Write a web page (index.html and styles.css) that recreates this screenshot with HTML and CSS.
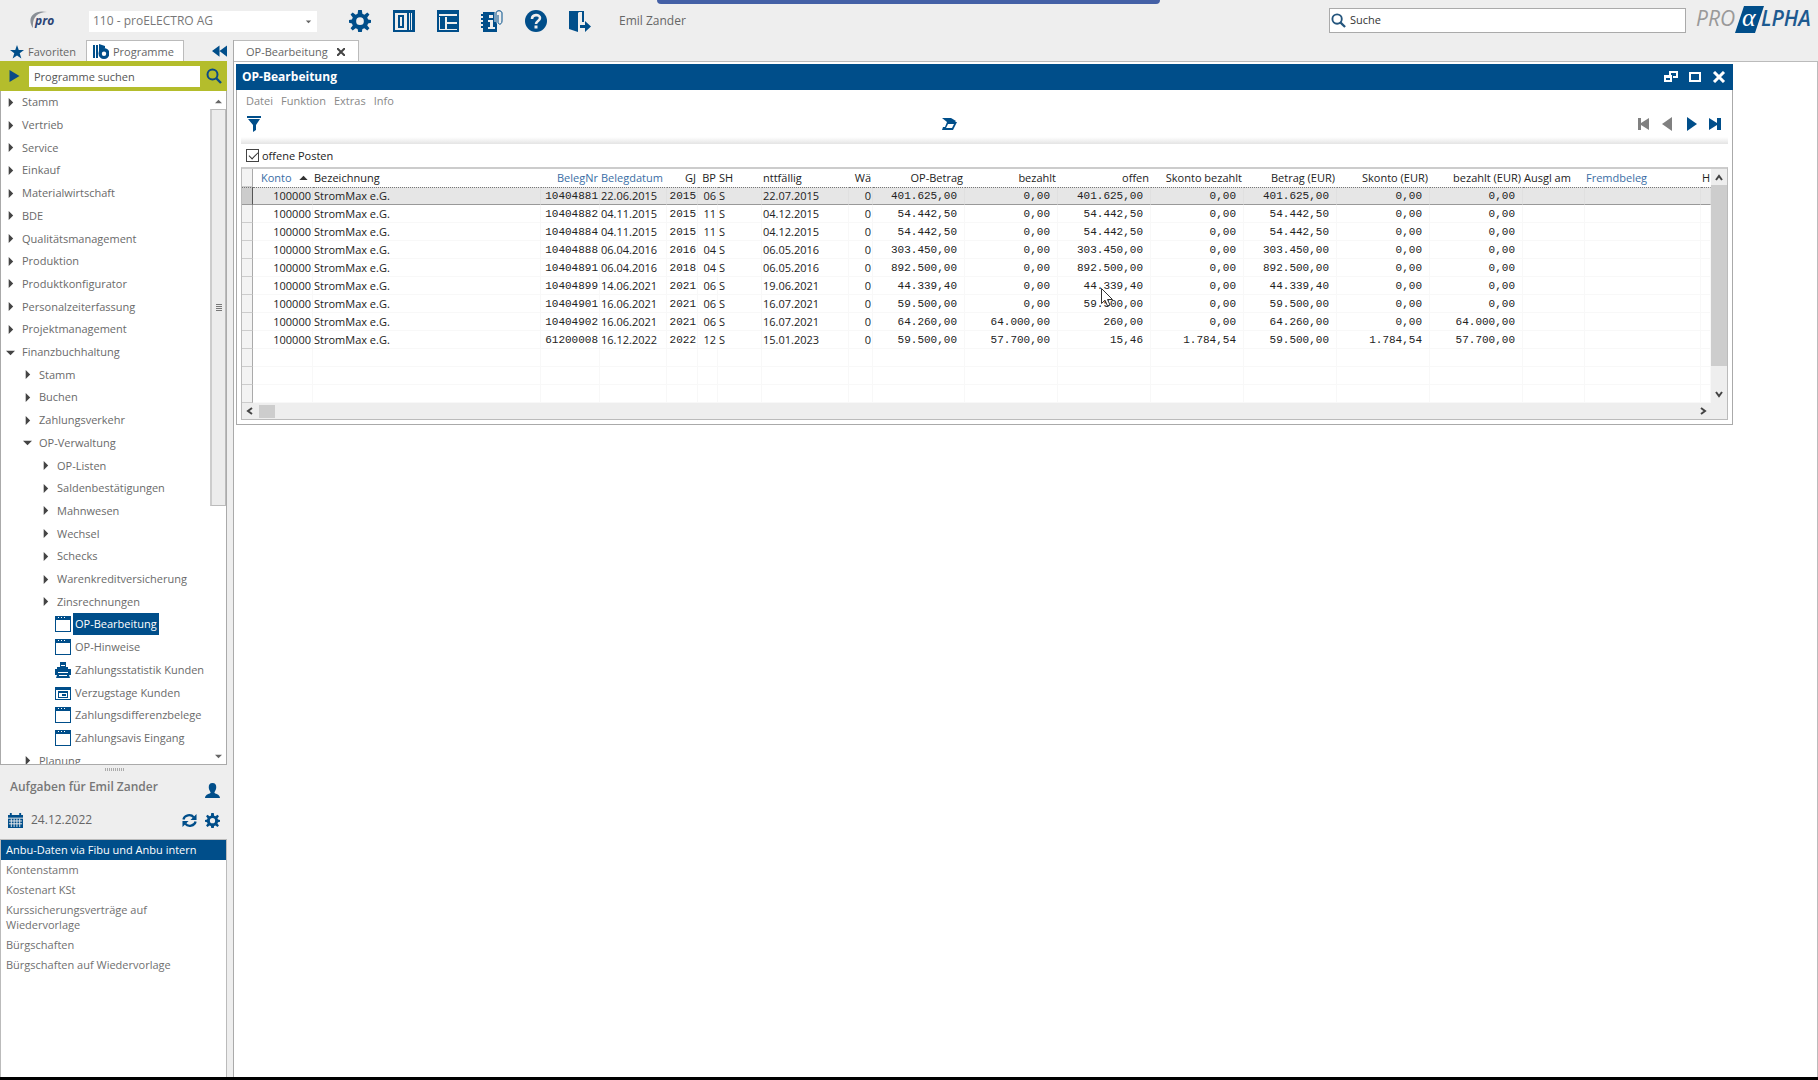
FILE: index.html
```html
<!DOCTYPE html>
<html lang="de">
<head>
<meta charset="utf-8">
<meta name="viewport" content="width=device-width, initial-scale=1">
<title>proALPHA – OP-Bearbeitung</title>
<link rel="stylesheet" href="styles.css">
</head>
<body>
<svg class="defs" aria-hidden="true">
  <symbol id="gear" viewBox="0 0 24 24"><path fill-rule="evenodd" d="M10 0h4l.6 4.200 2.200.9 3.200-2.400 2.300 2.300-2.400 3.200.9 2.200 3.200.6v3l-3.200.6-.9 2.200 2.400 3.200-2.300 2.300-3.200-2.400-2.200.9L14 24h-4l-.6-3.200-2.200-.9L4 22.300 1.700 20l2.400-3.200-.9-2.200L0 14v-3l3.200-.6.9-2.200L1.700 5 4 2.700l3.200 2.400 2.200-.9zM12 8a4.200 4.200 0 1 0 0 8.400A4.200 4.200 0 0 0 12 8z"/></symbol>
  <symbol id="lens" viewBox="0 0 16 16"><circle cx="6.500" cy="6.500" r="5" fill="none" stroke="currentColor" stroke-width="2"/><path d="M10 10l5 5" stroke="currentColor" stroke-width="2.400"/></symbol>
  <symbol id="right" viewBox="0 0 10 10"><path d="M3 0l5 5-5 5z"/></symbol>
  <symbol id="down" viewBox="0 0 10 10"><path d="M0 3h10L5 8z"/></symbol>
  <symbol id="form" viewBox="0 0 16 16"><path fill="#fff" d="M1 1h14v14H1z"/><path fill-rule="evenodd" d="M0 0h16v16H0zM1 4v11h14V4z"/><path fill="#fff" d="M3 1h1v1H3zM6 1h1v1H6zM9 1h1v1H9z"/></symbol>
  <symbol id="report" viewBox="0 0 16 16"><path fill-rule="evenodd" d="M0 2h16v13H0zM1 5v9h14V5z"/><path fill-rule="evenodd" d="M3 6h10v7H3zM4 8v4h8V8z"/><path d="M7 9h4v2H7z"/></symbol>
  <symbol id="printer" viewBox="0 0 16 16"><path d="M5 0h6v5h2v2h3v6h-2l1 3H1l1-3H0V7h2V5h3z"/><path fill="#fff" d="M3 10h10v1H3zM4 13h8v1H4zM6 3h4v1H6z"/></symbol>
</svg>

<header class="topbar">
  <svg class="logo-small" viewBox="0 0 28 20" role="img" aria-label="pro"><path d="M4 18C-3 8 5-1 18 2 8 2 3 8 4 18z" fill="#8a8f96"/><text x="6" y="15" class="logo-small-text">pro</text></svg>
  <div class="client">
    <select aria-label="Mandant"><option>110 - proELECTRO AG</option></select>
    <svg class="client-arrow" viewBox="0 0 10 10"><path d="M2 4h6L5 7z"/></svg>
  </div>
  <nav class="tools" aria-label="Werkzeuge">
    <button type="button" aria-label="Einstellungen"><svg><use href="#gear"/></svg></button>
    <button type="button" aria-label="Spalten"><svg viewBox="0 0 22 22"><path d="M0 0h22v22H0z"/><path fill="#eee" fill-rule="evenodd" d="M2 3h12v17H2zM5 5v13h6V5z"/><path fill="#eee" d="M7 7h2v9H7zM16 3h1v17h-1zM18 3h1v17h-1z"/></svg></button>
    <button type="button" aria-label="Layout"><svg viewBox="0 0 22 22"><path d="M0 0h22v22H0z"/><path fill="#eee" d="M2 4h18v2H2zM2 7h1v13H2zM8 7h2v13H8zM10 12h10v2H10zM2 19h18v1H2z"/></svg></button>
    <button type="button" aria-label="Info"><svg viewBox="0 0 22 22"><path d="M2 2h14v20H2zM0 4h3v2H0zM0 8h3v2H0zM0 12h3v2H0zM0 16h3v2H0z"/><path fill="#eee" d="M8 5h4v3H8zM7 10h5v7h2v2H7v-2h2v-5H7z"/><path d="M15 12V3c0-3 6-3 6 0v8c0 4-4 4-4 1V5" fill="none" stroke="#eee" stroke-width="3"/><path d="M15 12V3c0-3 6-3 6 0v8c0 4-4 4-4 1V5" fill="none" stroke="currentColor"/></svg></button>
    <button type="button" aria-label="Hilfe"><svg viewBox="0 0 22 22"><circle cx="11" cy="11" r="11"/><path d="M7 9c0-5 8-5 8-1 0 3-4 3-4 6" fill="none" stroke="#eee" stroke-width="2.600"/><path fill="#eee" d="M9.500 15.500h3v3h-3z"/></svg></button>
    <button type="button" aria-label="Abmelden"><svg viewBox="0 0 22 22"><path d="M0 1h15v11h-2V2h-3L9 3v19l-9-3z"/><path d="M11 15h5v-4l6 5.500-6 5.500v-4h-5z"/></svg></button>
  </nav>
  <span class="user">Emil Zander</span>
  <label class="search"><svg><use href="#lens"/></svg><input type="text" value="Suche" aria-label="Suche"></label>
  <svg class="brand" viewBox="0 0 120 28" role="img" aria-label="proALPHA"><path d="M48 0h20l-9 27H39z" fill="#004e8a"/><text x="0" y="20" class="brand-pro">PRO</text><text x="46" y="20" class="brand-alpha">α</text><text x="65" y="20" class="brand-lpha">LPHA</text></svg>
  <div class="session-bar"></div>
</header>

<div class="workspace">
  <aside class="sidebar">
    <div class="side-tabs">
      <button type="button" class="side-tab"><svg viewBox="0 0 16 16"><path d="M8 0l2 5.800h6l-4.900 3.600L13 15.500 8 12l-5 3.500 1.900-6.100L0 5.800h6z"/></svg>Favoriten</button>
      <button type="button" class="side-tab active"><svg viewBox="0 0 16 16"><path d="M0 1h2v13H0zM3 1h2v13H3zM6 0l6 2v2L8 6l-2 3z"/><path fill-rule="evenodd" d="M11 4a5.500 5.500 0 1 0 0 11 5.500 5.500 0 0 0 0-11zm0 3.500a2.200 2.200 0 1 1 0 4.400 2.200 2.200 0 0 1 0-4.400z"/></svg>Programme</button>
      <button type="button" class="collapse" aria-label="Einklappen"><svg viewBox="0 0 16 12"><path d="M8 0v12L0 6zM16 0v12L8 6z"/></svg></button>
    </div>
    <div class="prog-search">
      <button type="button" aria-label="Start"><svg viewBox="0 0 10 12"><path d="M0 0l10 6-10 6z"/></svg></button>
      <input type="text" value="Programme suchen" aria-label="Programme suchen">
      <button type="button" aria-label="Suchen"><svg class="lens"><use href="#lens"/></svg></button>
    </div>
    <nav class="tree-box" aria-label="Programme">
      <ul class="tree">
        <li><svg><use href="#right"/></svg><a href="#">Stamm</a></li>
        <li><svg><use href="#right"/></svg><a href="#">Vertrieb</a></li>
        <li><svg><use href="#right"/></svg><a href="#">Service</a></li>
        <li><svg><use href="#right"/></svg><a href="#">Einkauf</a></li>
        <li><svg><use href="#right"/></svg><a href="#">Materialwirtschaft</a></li>
        <li><svg><use href="#right"/></svg><a href="#">BDE</a></li>
        <li><svg><use href="#right"/></svg><a href="#">Qualitätsmanagement</a></li>
        <li><svg><use href="#right"/></svg><a href="#">Produktion</a></li>
        <li><svg><use href="#right"/></svg><a href="#">Produktkonfigurator</a></li>
        <li><svg><use href="#right"/></svg><a href="#">Personalzeiterfassung</a></li>
        <li><svg><use href="#right"/></svg><a href="#">Projektmanagement</a></li>
        <li><svg><use href="#down"/></svg><a href="#">Finanzbuchhaltung</a></li>
        <li class="l2"><svg><use href="#right"/></svg><a href="#">Stamm</a></li>
        <li class="l2"><svg><use href="#right"/></svg><a href="#">Buchen</a></li>
        <li class="l2"><svg><use href="#right"/></svg><a href="#">Zahlungsverkehr</a></li>
        <li class="l2"><svg><use href="#down"/></svg><a href="#">OP-Verwaltung</a></li>
        <li class="l3"><svg><use href="#right"/></svg><a href="#">OP-Listen</a></li>
        <li class="l3"><svg><use href="#right"/></svg><a href="#">Saldenbestätigungen</a></li>
        <li class="l3"><svg><use href="#right"/></svg><a href="#">Mahnwesen</a></li>
        <li class="l3"><svg><use href="#right"/></svg><a href="#">Wechsel</a></li>
        <li class="l3"><svg><use href="#right"/></svg><a href="#">Schecks</a></li>
        <li class="l3"><svg><use href="#right"/></svg><a href="#">Warenkreditversicherung</a></li>
        <li class="l3"><svg><use href="#right"/></svg><a href="#">Zinsrechnungen</a></li>
        <li class="leaf"><svg><use href="#form"/></svg><a href="#" class="current">OP-Bearbeitung</a></li>
        <li class="leaf"><svg><use href="#form"/></svg><a href="#">OP-Hinweise</a></li>
        <li class="leaf"><svg><use href="#printer"/></svg><a href="#">Zahlungsstatistik Kunden</a></li>
        <li class="leaf"><svg><use href="#report"/></svg><a href="#">Verzugstage Kunden</a></li>
        <li class="leaf"><svg><use href="#form"/></svg><a href="#">Zahlungsdifferenzbelege</a></li>
        <li class="leaf"><svg><use href="#form"/></svg><a href="#">Zahlungsavis Eingang</a></li>
        <li class="l2"><svg><use href="#right"/></svg><a href="#">Planung</a></li>
      </ul>
      <div class="tree-scroll">
        <svg viewBox="0 0 8 8"><path d="M0 6h8L4 2z"/></svg>
        <div class="tree-thumb"><span></span></div>
        <svg viewBox="0 0 8 8"><path d="M0 2h8L4 6z"/></svg>
      </div>
    </nav>
    <div class="splitter"><span></span></div>
    <section class="tasks">
      <div class="tasks-head">
        <h2>Aufgaben für Emil Zander</h2>
        <svg viewBox="0 0 16 16"><path d="M8 0c3 0 4 2 4 4.500S10.500 9 10 10c0 1.500 6 1.500 6 6H0c0-4.500 6-4.500 6-6-.5-1-2-3-2-5.500S5 0 8 0z"/></svg>
      </div>
      <div class="tasks-date">
        <svg viewBox="0 0 16 16"><path d="M0 2h2V0h2v2h8V0h2v2h2v14H0z"/><path stroke="#eee" d="M0 5.500h16M1 8.500h14M1 11.500h14M3.500 6v9M6.500 6v9M9.500 6v9M12.500 6v9" fill="none"/></svg>
        <time datetime="2022-12-24">24.12.2022</time>
        <button type="button" aria-label="Aktualisieren"><svg viewBox="0 0 16 16"><path d="M1.500 7c1-5 8-6 11-2.500M14.500 9c-1 5-8 6-11 2.500" fill="none" stroke="currentColor" stroke-width="2.400"/><path d="M15.500 1v6.500H9zM.5 15V8.500H7z"/></svg></button>
        <button type="button" aria-label="Aufgaben einstellen"><svg><use href="#gear"/></svg></button>
      </div>
      <ul class="task-list">
        <li class="current">Anbu-Daten via Fibu und Anbu intern</li>
        <li>Kontenstamm</li>
        <li>Kostenart KSt</li>
        <li>Kurssicherungsverträge auf Wiedervorlage</li>
        <li>Bürgschaften</li>
        <li>Bürgschaften auf Wiedervorlage</li>
      </ul>
    </section>
  </aside>

  <main class="content">
    <div class="doc-tabs">
      <div class="doc-tab">OP-Bearbeitung<button type="button" aria-label="Tab schließen"><svg viewBox="0 0 8 8"><path d="M0 0l8 8M8 0L0 8" stroke="currentColor" stroke-width="2"/></svg></button></div>
    </div>
    <div class="desk">
      <section class="window">
        <div class="titlebar">
          <h1>OP-Bearbeitung</h1>
          <button type="button" aria-label="Wiederherstellen"><svg viewBox="0 0 14 12"><path fill="none" stroke="currentColor" stroke-width="2" d="M1 6h6v4H1zM6 4V1h7v5H9"/><path d="M0 4h8v2H0zM5 0h9v2H5z"/></svg></button>
          <button type="button" aria-label="Maximieren"><svg viewBox="0 0 14 12"><path fill="none" stroke="currentColor" stroke-width="2" d="M2 2h10v8H2z"/><path d="M1 1h12v2H1z"/></svg></button>
          <button type="button" aria-label="Schließen"><svg viewBox="0 0 14 12"><path stroke="currentColor" stroke-width="3" d="M2 1l10 10M12 1L2 11"/></svg></button>
        </div>
        <nav class="menu" aria-label="Menü"><a href="#">Datei</a><a href="#">Funktion</a><a href="#">Extras</a><a href="#">Info</a></nav>
        <div class="toolbar">
          <button type="button" aria-label="Filter"><svg viewBox="0 0 16 16"><path d="M1 0h14v2H1zM2 3h12l-4 6v5l-3 2V9z"/></svg></button>
          <button type="button" aria-label="Verknüpfungen"><svg viewBox="0 0 16 16"><path d="M1 2h9l5 3-1 1H6z"/><path fill-rule="evenodd" d="M6 6h10l-4 8H1l1-3h2zM7 8l-2 4h6l2-4z"/></svg></button>
          <div class="record-nav">
            <button type="button" disabled aria-label="Erster"><svg viewBox="0 0 16 16"><path d="M2 2h3v5l8-5v12L5 9v5H2z"/></svg></button>
            <button type="button" disabled aria-label="Zurück"><svg viewBox="0 0 16 16"><path d="M12 1v14L2 8z"/></svg></button>
            <button type="button" aria-label="Weiter"><svg viewBox="0 0 16 16"><path d="M3 1v14l10-7z"/></svg></button>
            <button type="button" aria-label="Letzter"><svg viewBox="0 0 16 16"><path d="M1 2l8 5V2h4v12H9V9l-8 5z"/></svg></button>
          </div>
        </div>
        <label class="filter"><input type="checkbox" checked>offene Posten</label>
        <div class="grid">
          <div class="grid-view">
            <table>
              <colgroup><col class="c-mark"><col class="c-konto"><col class="c-bez"><col class="c-nr"><col class="c-date"><col class="c-gj"><col class="c-bp"><col class="c-sh"><col class="c-due"><col class="c-wa"><col class="c-op"><col class="c-amt"><col class="c-amt"><col class="c-amt"><col class="c-amt"><col class="c-amt"><col class="c-amt"><col class="c-ausgl"><col><col class="c-h"></colgroup>
              <thead><tr><th></th><th class="key sorted">Konto<svg viewBox="0 0 10 6"><path d="M0 6h10L5 1z"/></svg></th><th>Bezeichnung</th><th class="key num">BelegNr</th><th class="key">Belegdatum</th><th class="num">GJ</th><th class="num">BP</th><th>SH</th><th>nttfällig</th><th class="num">Wä</th><th class="num">OP-Betrag</th><th class="num">bezahlt</th><th class="num">offen</th><th class="num">Skonto bezahlt</th><th class="num">Betrag (EUR)</th><th class="num">Skonto (EUR)</th><th class="num">bezahlt (EUR)</th><th>Ausgl am</th><th class="key">Fremdbeleg</th><th>H</th></tr></thead>
              <tbody>
                <tr class="selected"><td></td><td class="num">100000</td><td>StromMax e.G.</td><td class="id">10404881</td><td>22.06.2015</td><td class="id">2015</td><td class="num">06</td><td>S</td><td>22.07.2015</td><td class="num">0</td><td class="amt">401.625,00</td><td class="amt">0,00</td><td class="amt">401.625,00</td><td class="amt">0,00</td><td class="amt">401.625,00</td><td class="amt">0,00</td><td class="amt">0,00</td><td></td><td></td><td></td></tr>
                <tr><td></td><td class="num">100000</td><td>StromMax e.G.</td><td class="id">10404882</td><td>04.11.2015</td><td class="id">2015</td><td class="num">11</td><td>S</td><td>04.12.2015</td><td class="num">0</td><td class="amt">54.442,50</td><td class="amt">0,00</td><td class="amt">54.442,50</td><td class="amt">0,00</td><td class="amt">54.442,50</td><td class="amt">0,00</td><td class="amt">0,00</td><td></td><td></td><td></td></tr>
                <tr><td></td><td class="num">100000</td><td>StromMax e.G.</td><td class="id">10404884</td><td>04.11.2015</td><td class="id">2015</td><td class="num">11</td><td>S</td><td>04.12.2015</td><td class="num">0</td><td class="amt">54.442,50</td><td class="amt">0,00</td><td class="amt">54.442,50</td><td class="amt">0,00</td><td class="amt">54.442,50</td><td class="amt">0,00</td><td class="amt">0,00</td><td></td><td></td><td></td></tr>
                <tr><td></td><td class="num">100000</td><td>StromMax e.G.</td><td class="id">10404888</td><td>06.04.2016</td><td class="id">2016</td><td class="num">04</td><td>S</td><td>06.05.2016</td><td class="num">0</td><td class="amt">303.450,00</td><td class="amt">0,00</td><td class="amt">303.450,00</td><td class="amt">0,00</td><td class="amt">303.450,00</td><td class="amt">0,00</td><td class="amt">0,00</td><td></td><td></td><td></td></tr>
                <tr><td></td><td class="num">100000</td><td>StromMax e.G.</td><td class="id">10404891</td><td>06.04.2016</td><td class="id">2018</td><td class="num">04</td><td>S</td><td>06.05.2016</td><td class="num">0</td><td class="amt">892.500,00</td><td class="amt">0,00</td><td class="amt">892.500,00</td><td class="amt">0,00</td><td class="amt">892.500,00</td><td class="amt">0,00</td><td class="amt">0,00</td><td></td><td></td><td></td></tr>
                <tr><td></td><td class="num">100000</td><td>StromMax e.G.</td><td class="id">10404899</td><td>14.06.2021</td><td class="id">2021</td><td class="num">06</td><td>S</td><td>19.06.2021</td><td class="num">0</td><td class="amt">44.339,40</td><td class="amt">0,00</td><td class="amt">44.339,40</td><td class="amt">0,00</td><td class="amt">44.339,40</td><td class="amt">0,00</td><td class="amt">0,00</td><td></td><td></td><td></td></tr>
                <tr><td></td><td class="num">100000</td><td>StromMax e.G.</td><td class="id">10404901</td><td>16.06.2021</td><td class="id">2021</td><td class="num">06</td><td>S</td><td>16.07.2021</td><td class="num">0</td><td class="amt">59.500,00</td><td class="amt">0,00</td><td class="amt">59.500,00</td><td class="amt">0,00</td><td class="amt">59.500,00</td><td class="amt">0,00</td><td class="amt">0,00</td><td></td><td></td><td></td></tr>
                <tr><td></td><td class="num">100000</td><td>StromMax e.G.</td><td class="id">10404902</td><td>16.06.2021</td><td class="id">2021</td><td class="num">06</td><td>S</td><td>16.07.2021</td><td class="num">0</td><td class="amt">64.260,00</td><td class="amt">64.000,00</td><td class="amt">260,00</td><td class="amt">0,00</td><td class="amt">64.260,00</td><td class="amt">0,00</td><td class="amt">64.000,00</td><td></td><td></td><td></td></tr>
                <tr><td></td><td class="num">100000</td><td>StromMax e.G.</td><td class="id">61200008</td><td>16.12.2022</td><td class="id">2022</td><td class="num">12</td><td>S</td><td>15.01.2023</td><td class="num">0</td><td class="amt">59.500,00</td><td class="amt">57.700,00</td><td class="amt">15,46</td><td class="amt">1.784,54</td><td class="amt">59.500,00</td><td class="amt">1.784,54</td><td class="amt">57.700,00</td><td></td><td></td><td></td></tr>
                <tr><td></td><td></td><td></td><td></td><td></td><td></td><td></td><td></td><td></td><td></td><td></td><td></td><td></td><td></td><td></td><td></td><td></td><td></td><td></td><td></td></tr>
                <tr><td></td><td></td><td></td><td></td><td></td><td></td><td></td><td></td><td></td><td></td><td></td><td></td><td></td><td></td><td></td><td></td><td></td><td></td><td></td><td></td></tr>
                <tr><td></td><td></td><td></td><td></td><td></td><td></td><td></td><td></td><td></td><td></td><td></td><td></td><td></td><td></td><td></td><td></td><td></td><td></td><td></td><td></td></tr>
              </tbody>
            </table>
            <div class="vscroll">
              <svg viewBox="0 0 8 8"><path d="M1 6l3-4 3 4"/></svg>
              <div class="vthumb"></div>
              <svg viewBox="0 0 8 8"><path d="M1 2l3 4 3-4"/></svg>
            </div>
          </div>
          <div class="hscroll">
            <svg viewBox="0 0 8 8"><path d="M6 1L2 4l4 3"/></svg>
            <div class="hthumb"></div>
            <svg viewBox="0 0 8 8"><path d="M2 1l4 3-4 3"/></svg>
          </div>
        </div>
      </section>
    </div>
  </main>
</div>
<svg class="pointer" viewBox="0 0 13 20" aria-hidden="true"><path d="M.5.500v15l3.500-3.300 2.500 5.800 2.500-1-2.500-5.500H11.500z" fill="#fff" stroke="#333"/></svg>
</body>
</html>
```
FILE: styles.css
```css
* { box-sizing: border-box; }

body {
  margin: 0;
  height: 100vh;
  display: flex;
  flex-direction: column;
  overflow: hidden;
  position: relative;
  background: #eee;
  border-bottom: 3px solid #000;
  color: #666;
  font: 11px/16px "Open Sans", "Noto Sans", sans-serif;
}

button, input, select { font: inherit; color: inherit; }
button { display: flex; align-items: center; border: 0; padding: 0; background: none; }
svg { fill: currentColor; flex: none; }
ul { list-style: none; margin: 0; padding: 0; }
a { color: inherit; text-decoration: none; }
.defs { display: none; }

/* top bar */
.topbar {
  height: 40px;
  flex: none;
  display: flex;
  align-items: center;
  padding: 0 2px 0 29px;
  position: relative;
}
.logo-small { width: 28px; height: 20px; }
.logo-small-text { font: italic bold 12px "Open Sans", sans-serif; fill: #2d4475; }
.client { display: flex; align-items: center; width: 228px; height: 21px; margin: 2px 0 0 32px; background: #fff; }
.client select { flex: 1; height: 21px; appearance: none; border: 0; padding: 0 4px; background: none; font-size: 12px; color: #777; }
.client-arrow { width: 9px; height: 9px; margin-right: 4px; }
.tools { display: flex; gap: 22px; margin: 2px 0 0 32px; color: #004e8a; }
.tools svg { width: 22px; height: 22px; }
.user { margin: 2px 0 0 28px; font-size: 12px; }
.search {
  display: flex;
  align-items: center;
  width: 357px;
  height: 25px;
  margin: 0 10px 0 auto;
  padding-left: 1px;
  background: #fff;
  border: 1px solid #aaa;
}
.search svg { width: 15px; height: 15px; color: #24557d; }
.search input { flex: 1; border: 0; padding: 0 4px; background: none; color: #333; }
.brand { width: 120px; height: 28px; }
.brand-pro, .brand-lpha { font: italic 21px "Open Sans", sans-serif; fill: #999; }
.brand-lpha { fill: #1d5a90; font-weight: 600; }
.brand-alpha { font: italic 26px "Liberation Serif", serif; fill: #fff; }
.session-bar {
  position: absolute;
  top: 0;
  left: 50%;
  width: 503px;
  height: 4px;
  margin-left: -252px;
  border-radius: 0 0 4px 4px;
  background: #4460a6;
}

.workspace { flex: 1; min-height: 0; display: flex; gap: 6px; }

/* sidebar */
.sidebar { width: 227px; flex: none; display: flex; flex-direction: column; }
.side-tabs { display: flex; height: 21px; padding-left: 10px; }
.side-tab { gap: 4px; padding: 2px 0 0; width: 76px; }
.side-tab svg { width: 14px; height: 14px; color: #004e8a; }
.side-tab.active { width: 98px; padding-left: 6px; background: #fff; border: 1px solid #bbb; border-bottom: 0; }
.side-tab.active svg { width: 16px; height: 16px; }
.collapse { margin-left: auto; color: #004e8a; }
.collapse svg { width: 15px; height: 12px; }
.prog-search { display: flex; align-items: center; height: 30px; padding: 0 5px 0 9px; background: #b4bd2c; color: #0b4a86; }
.prog-search svg { width: 11px; height: 12px; }
.prog-search .lens { width: 16px; height: 16px; }
.prog-search input { flex: 1; min-width: 0; height: 21px; margin: 0 6px 0 9px; padding: 0 5px; border: 0; background: #fff; color: #555; }

.tree-box { flex: 1; min-height: 0; display: flex; overflow: hidden; background: #fff; border: 1px solid #aaa; border-top: 0; }
.tree { flex: 1; display: grid; grid-auto-rows: 1fr; margin-bottom: -8px; color: #6a6a6a; }
.tree li { display: flex; align-items: center; gap: 7px; padding-left: 5px; min-height: 0; white-space: nowrap; }
.tree svg { width: 9px; height: 9px; color: #444; }
.tree .l2 { padding-left: 22px; }
.tree .l3 { padding-left: 40px; }
.tree .leaf { padding-left: 54px; gap: 2px; }
.tree .leaf svg { width: 16px; height: 16px; color: #004e8a; }
.tree .leaf a { padding: 3px 2px; }
.tree .leaf .current { background: #004e8a; color: #fff; }
.tree-scroll { width: 16px; flex: none; display: flex; flex-direction: column; align-items: center; padding: 7px 0 4px; }
.tree-scroll svg { width: 7px; height: 7px; }
.tree-thumb { width: 16px; height: 60%; margin: 4px 0 auto; background: #ececec; border: 1px solid #bbb; border-left: 2px solid #ccc; display: flex; align-items: center; justify-content: center; }
.tree-thumb span { width: 6px; height: 7px; background: repeating-linear-gradient(#777 0 1px, #ececec 1px 2px); }
.splitter { height: 8px; display: flex; justify-content: center; align-items: center; padding-left: 2px; }
.splitter span { width: 20px; height: 3px; background: repeating-linear-gradient(90deg, #aaa 0 1px, #eee 1px 2px); }

/* tasks */
.tasks { height: 304px; flex: none; display: flex; flex-direction: column; }
.tasks h2 { margin: 0; font-size: 12px; font-weight: 600; line-height: 20px; color: #777; }
.tasks-head, .tasks-date { display: flex; align-items: center; height: 28px; padding: 0 7px 0 10px; }
.tasks-date { height: 38px; padding-left: 8px; gap: 8px; }
.tasks time { flex: 1; font-size: 12px; }
.tasks svg { width: 15px; height: 15px; color: #004e8a; }
.tasks-head svg { margin: 6px 0 0 auto; }
.task-list { flex: 1; background: #fff; border: 1px solid #bbb; border-bottom: 0; color: #707070; }
.task-list li { padding: 2px 46px 3px 5px; line-height: 15px; }
.task-list .current { background: #004e8a; color: #fff; padding-right: 0; }

/* document area */
.content { flex: 1; min-width: 0; display: flex; flex-direction: column; border-left: 1px solid #aaa; }
.doc-tabs { height: 21px; display: flex; }
.doc-tab { display: flex; align-items: center; gap: 9px; width: 125px; padding: 2px 0 0 12px; background: #fff; border: 1px solid #bbb; border-width: 1px 1px 0 0; }
.doc-tab button { color: #444; }
.doc-tab svg { width: 8px; height: 8px; }
.desk { flex: 1; padding: 2px 84px 0 2px; background: #fff; border-top: 1px solid #bbb; border-right: 1px solid #bbb; }

/* program window */
.window { border: 1px solid #aaa; border-top: 0; padding: 0 4px 4px; background: #fff; color: #222; }
.titlebar { display: flex; align-items: center; gap: 10px; height: 26px; margin: 0 -5px; padding: 0 7px 0 6px; background: #004e8a; color: #fff; }
.titlebar h1 { flex: 1; margin: 0; font-size: 12px; font-weight: 700; line-height: 16px; }
.titlebar svg { width: 14px; height: 12px; }
.menu { display: flex; gap: 8px; height: 21px; padding-left: 5px; line-height: 22px; color: #888; }
.toolbar { display: grid; grid-template-columns: 47% 1fr auto; align-items: center; height: 33px; padding: 0 4px 7px 5px; background: linear-gradient(#fff 26px, #e4e4e4); color: #004e8a; }
.toolbar svg { width: 16px; height: 16px; }
.record-nav { display: flex; gap: 8px; }
.record-nav button:disabled { color: #808080; }
.filter { display: flex; align-items: center; gap: 3px; width: max-content; height: 23px; padding-left: 5px; }
.filter input { position: relative; appearance: none; width: 13px; height: 13px; margin: 0; border: 1px solid #444; background: #fff; }
.filter input:checked::before { content: ""; position: absolute; left: 2px; top: 2px; width: 8px; height: 4px; border: solid #333; border-width: 0 0 1px 1px; transform: rotate(-45deg); }

.grid { border: 1px solid #bbb; border-top: 2px solid #ccc; }
.grid-view { display: flex; }
table { flex: 1; width: 0; table-layout: fixed; border-collapse: separate; border-spacing: 0; }
.c-mark { width: 11px; }
.c-konto { width: 60px; }
.c-bez { width: 228px; }
.c-nr { width: 59px; }
.c-date { width: 67px; }
.c-gj { width: 31px; }
.c-bp { width: 20px; }
.c-sh { width: 44px; }
.c-due { width: 87px; }
.c-wa { width: 24px; }
.c-op { width: 92px; }
.c-amt { width: 93px; }
.c-ausgl { width: 62px; }
.c-h { width: 10px; }
th, td { height: 18px; padding: 0 1px; line-height: 16px; white-space: nowrap; text-align: left; font-weight: 400; border-right: 1px solid #f8f8f8; border-bottom: 1px solid #f8f8f8; }
th { border-color: #fff; }
.num, .id, .amt { text-align: right; }
.id, .amt { font-family: "Liberation Mono", monospace; }
.amt { padding-right: 7px; }
.key { color: #3a6ea5; }
.sorted { padding-left: 8px; }
.sorted svg { width: 9px; height: 5px; margin: 0 0 2px 7px; color: #333; }
th:first-child, td:first-child { background: #f3f3f3; border-right: 1px solid #aaa; border-bottom-color: #ccc; }
.selected td { background: #e6e6e6; border-top: 1px dotted #777; border-bottom: 1px solid #999; border-right-color: #e0e0e0; }
.selected td:first-child { background: #ccc; border-right-color: #555; }

.vscroll { width: 16px; display: flex; flex-direction: column; align-items: center; justify-content: space-between; padding: 5px 0; background: #eee; }
.vscroll svg, .hscroll svg { width: 8px; height: 8px; fill: none; stroke: #444; stroke-width: 2px; }
.vthumb { flex: 1; width: 16px; margin: 3px 0 24px; background: #cdcdcd; }
.hscroll { display: flex; align-items: center; height: 16px; padding: 0 20px 0 4px; background: #eee; }
.hthumb { width: 16px; height: 13px; margin: 0 auto 0 5px; background: #cdcdcd; }

.pointer { position: absolute; left: 1101px; top: 288px; width: 13px; height: 20px; }
```
